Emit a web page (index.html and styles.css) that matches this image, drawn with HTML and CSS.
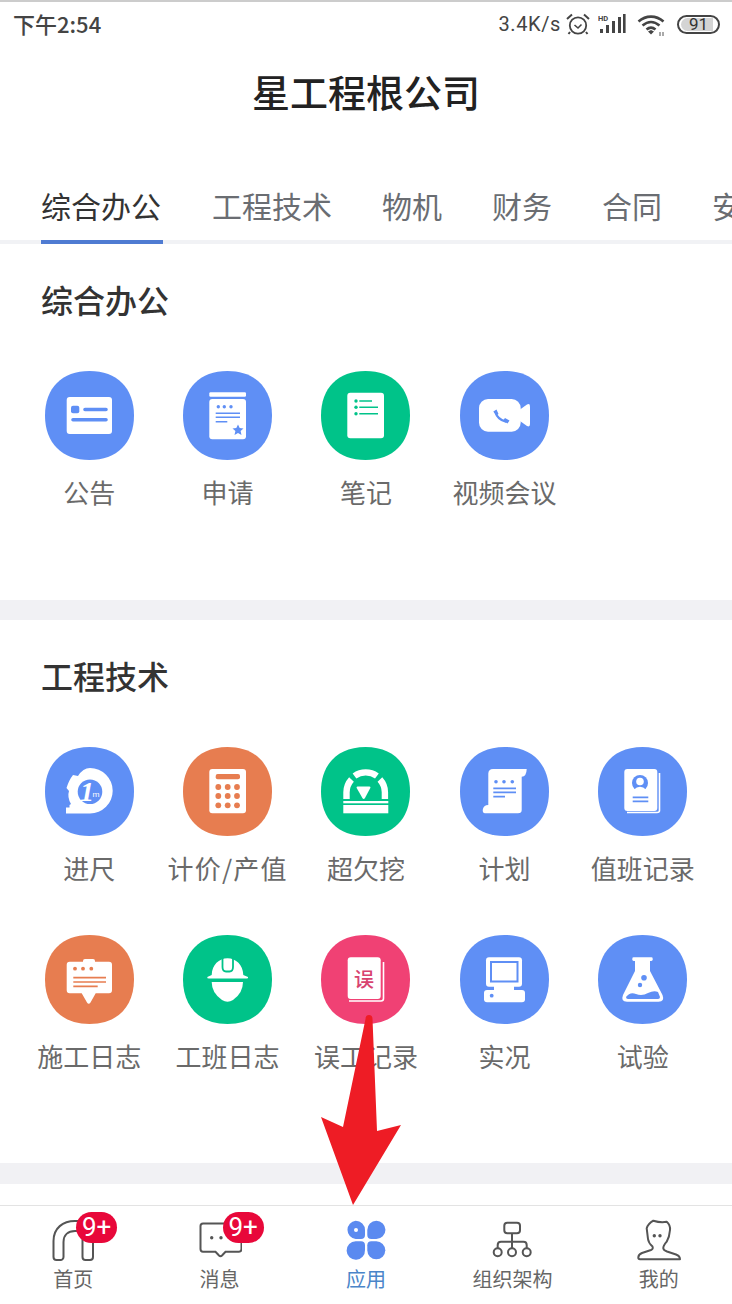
FILE: index.html
```html
<!DOCTYPE html>
<html lang="zh">
<head>
<meta charset="utf-8">
<title>星工程根公司</title>
<link rel="stylesheet" href="styles.css">
</head>
<body>
<svg class="defs" width="0" height="0"><defs>
<path id="sq" d="M44.5 0C72 0 89 17 89 44.5C89 72 72 89 44.5 89C17 89 0 72 0 44.5C0 17 17 0 44.5 0Z"/>
</defs></svg>
<div class="app">
  <header class="status">
    <span class="clock">下午2:54</span>
    <div class="status-right">
      <span class="speed">3.4K/s</span>
      <svg class="st-alarm" width="24" height="22" viewBox="0 0 24 22"><circle cx="12" cy="12.5" r="8.2" fill="none" stroke="#444" stroke-width="1.8"/><path d="M8.5 12l3.5 3 3.5-3.5" fill="none" stroke="#444" stroke-width="1.6"/><path d="M1 6l5-4.5M23 6l-5-4.5M4 19l-1.5 2M20 19l1.5 2" stroke="#444" stroke-width="2" fill="none"/></svg>
      <svg class="st-signal" width="28" height="20" viewBox="0 0 28 20"><text x="0" y="6.5" class="hd">HD</text><rect x="2" y="15" width="3" height="4" fill="#444"/><rect x="8" y="11" width="3" height="8" fill="#444"/><rect x="14" y="7" width="3" height="12" fill="#444"/><rect x="20" y="3" width="3" height="16" fill="#444"/><rect x="25" y="0" width="2.6" height="19" fill="#444"/></svg>
      <svg class="st-wifi" width="30" height="23" viewBox="0 0 30 23"><path d="M1.5 7.5C9 1 19 1 26.5 7.5M5.5 11.5C11 7 17 7 22.5 11.5M9.5 15.5C12.5 13 15.5 13 18.5 15.5" fill="none" stroke="#444" stroke-width="2.6"/><path d="M11 17.5l3-1.5 3 1.5-3 3z" fill="#444"/><path d="M23 18v4M26 18v4" stroke="#555" stroke-width="1"/></svg>
      <div class="battery"><span class="battery-fill"></span><span class="battery-num">91</span></div>
    </div>
  </header>

  <h1 class="title">星工程根公司</h1>

  <nav class="tabs">
    <span class="tab tab-active">综合办公</span>
    <span class="tab">工程技术</span>
    <span class="tab">物机</span>
    <span class="tab">财务</span>
    <span class="tab">合同</span>
    <span class="tab">安全</span>
  </nav>

  <main class="content">
    <section class="section">
      <h2 class="section-title">综合办公</h2>
      <div class="grid">
        <div class="item">
          <svg class="icon blue" viewBox="0 0 89 89"><use href="#sq" fill="currentColor"/><rect x="21.7" y="26" width="45.3" height="37" rx="3" fill="#fff"/><rect x="26" y="34.7" width="8.3" height="7.6" rx="2" fill="currentColor"/><path d="M40 38.5H61M28 48.7H61" stroke="currentColor" stroke-width="3.6" stroke-linecap="round"/></svg>
          <span class="label">公告</span>
        </div>
        <div class="item">
          <svg class="icon blue" viewBox="0 0 89 89"><use href="#sq" fill="currentColor"/><rect x="26.3" y="21.3" width="36.7" height="4.4" rx="1.2" fill="#fff"/><rect x="26.3" y="28" width="36.7" height="40.3" rx="3" fill="#fff"/><circle cx="35.3" cy="35.7" r="1.7" fill="currentColor"/><circle cx="41.3" cy="35.7" r="1.7" fill="currentColor"/><circle cx="48" cy="35.7" r="1.7" fill="currentColor"/><path d="M32.7 42.3H57M32.7 46.3H57M32.7 50.7H44.3" stroke="currentColor" stroke-width="1.6"/><path d="M55 53.5l1.7 3.6 3.8.4-2.9 2.6.9 3.9-3.5-2-3.5 2 .9-3.9-2.9-2.6 3.8-.4z" fill="currentColor"/></svg>
          <span class="label">申请</span>
        </div>
        <div class="item">
          <svg class="icon green" viewBox="0 0 89 89"><use href="#sq" fill="currentColor"/><rect x="26.3" y="21.7" width="36.7" height="45.6" rx="3" fill="#fff"/><circle cx="35" cy="30" r="1.7" fill="currentColor"/><circle cx="35" cy="36.3" r="1.7" fill="currentColor"/><circle cx="35" cy="42.7" r="1.7" fill="currentColor"/><path d="M38.3 30H51M38.3 36.3H57M38.3 42.7H57" stroke="currentColor" stroke-width="1.5"/></svg>
          <span class="label">笔记</span>
        </div>
        <div class="item">
          <svg class="icon blue" viewBox="0 0 89 89"><use href="#sq" fill="currentColor"/><rect x="19" y="28" width="41.7" height="32.7" rx="9" fill="#fff"/><path d="M60 38.5L67 33.5Q70 32 70 35.5V53Q70 56.5 67 55L60 50Z" fill="#fff"/><path d="M35.5 40.5Q37 48.5 46.5 51" fill="none" stroke="currentColor" stroke-width="2.2"/><path d="M33.3 40.5L36.5 38.5 38.5 43 36 44.5ZM43 49.5L45 47 49.5 49.5 47.5 52.5Z" fill="currentColor"/></svg>
          <span class="label">视频会议</span>
        </div>
      </div>
    </section>

    <div class="band"></div>

    <section class="section section-2">
      <h2 class="section-title">工程技术</h2>
      <div class="grid">
        <div class="item">
          <svg class="icon blue" viewBox="0 0 89 89"><use href="#sq" fill="currentColor"/><path d="M28 28L33 29Q38 21 45 21A22.7 22.7 0 0 1 45 66.4H21V60.5H24.5V58L26 57Q22 50 24 44L21.5 41Q24 33 28 28Z" fill="#fff"/><circle cx="45" cy="44.7" r="12.3" fill="currentColor"/><text x="42" y="54" class="tape-one">1</text><text x="47.5" y="49.5" class="tape-m">m</text></svg>
          <span class="label">进尺</span>
        </div>
        <div class="item">
          <svg class="icon orange" viewBox="0 0 89 89"><use href="#sq" fill="currentColor"/><rect x="26.3" y="22" width="36.7" height="44.3" rx="3" fill="#fff"/><rect x="32.7" y="27" width="24.3" height="5.3" rx="2" fill="currentColor"/><g fill="currentColor"><circle cx="35.3" cy="40" r="2.9"/><circle cx="44.7" cy="40" r="2.9"/><circle cx="54" cy="40" r="2.9"/><circle cx="35.3" cy="49" r="2.9"/><circle cx="44.7" cy="49" r="2.9"/><circle cx="54" cy="49" r="2.9"/><circle cx="35.3" cy="58.3" r="2.9"/><circle cx="44.7" cy="58.3" r="2.9"/><circle cx="54" cy="58.3" r="2.9"/></g></svg>
          <span class="label label-wide">计价/产值</span>
        </div>
        <div class="item">
          <svg class="icon green" viewBox="0 0 89 89"><use href="#sq" fill="currentColor"/><path d="M25.5 52V45.3A19.2 19.2 0 0 1 30.5 32.5M58.9 32.5A19.2 19.2 0 0 1 63.9 45.3V52" fill="none" stroke="#fff" stroke-width="6.4"/><path d="M33.5 29A19.2 19.2 0 0 1 55.9 29" fill="none" stroke="#fff" stroke-width="6.4"/><rect x="22.3" y="54" width="45" height="2.3" fill="#fff"/><rect x="22.3" y="58" width="45" height="8.3" fill="#fff"/><path d="M36.5 39.5H48.5Q50 39.5 49.3 41L44 51Q42.6 53 41.4 51L35.7 41Q35 39.5 36.5 39.5Z" fill="#fff"/></svg>
          <span class="label">超欠挖</span>
        </div>
        <div class="item">
          <svg class="icon blue" viewBox="0 0 89 89"><use href="#sq" fill="currentColor"/><path d="M28.3 26.5Q28.5 22 33 22H66.7Q66.5 29.7 61.7 29.7V63Q61.7 66.3 58 66.3H25Q22.7 66.3 22.7 63Q23.5 58 28.3 58Z" fill="#fff"/><circle cx="36" cy="34.7" r="1.8" fill="currentColor"/><circle cx="44" cy="34.7" r="1.8" fill="currentColor"/><circle cx="52.3" cy="34.7" r="1.8" fill="currentColor"/><path d="M33.3 41.3H56M33.3 45.3H56M33.3 49.7H45" stroke="currentColor" stroke-width="1.7"/></svg>
          <span class="label">计划</span>
        </div>
        <div class="item">
          <svg class="icon blue" viewBox="0 0 89 89"><use href="#sq" fill="currentColor"/><path d="M61.5 26V63.5Q61.5 65.5 59 65.5H29" fill="none" stroke="#fff" stroke-width="1.6"/><rect x="26.3" y="22" width="33" height="42" rx="3" fill="#fff"/><circle cx="42" cy="36" r="8" fill="currentColor"/><circle cx="42" cy="34.5" r="3.8" fill="#fff"/><path d="M35.5 43Q42 36.5 48.5 43L45 45H39Z" fill="#fff"/><path d="M34.7 50.3H50.3M34.7 54.3H50.3" stroke="currentColor" stroke-width="1.7"/></svg>
          <span class="label">值班记录</span>
        </div>
        <div class="item">
          <svg class="icon orange" viewBox="0 0 89 89"><use href="#sq" fill="currentColor"/><rect x="38" y="24" width="12" height="5" rx="2" fill="#fff"/><path d="M24.7 26.7H64Q67 26.7 67 29.7V55.3Q67 58.3 64 58.3H50.7L45.5 67.5Q43.7 70 42 67.5L36.7 58.3H24.7Q21.7 58.3 21.7 55.3V29.7Q21.7 26.7 24.7 26.7Z" fill="#fff"/><circle cx="30" cy="33.7" r="1.9" fill="currentColor"/><circle cx="38" cy="33.7" r="1.9" fill="currentColor"/><circle cx="46.3" cy="33.7" r="1.9" fill="currentColor"/><path d="M28.3 42.7H61M28.3 47H61M28.3 51.3H52.7" stroke="currentColor" stroke-width="1.7"/></svg>
          <span class="label">施工日志</span>
        </div>
        <div class="item">
          <svg class="icon green" viewBox="0 0 89 89"><use href="#sq" fill="currentColor"/><path d="M28.7 40C29 30 36 23.3 44.5 23.3S60 30 60.3 40L65 42Q65.5 43.5 63 43.5H26Q23.8 43.5 24.3 42Z" fill="#fff"/><path d="M39.5 23V32Q39.5 36.5 43 36.5H46.5Q50 36.5 50 32V23" fill="none" stroke="currentColor" stroke-width="1.8"/><path d="M28.7 47H60Q60 58 50 65Q44.5 68.5 39 65Q28.7 58 28.7 47Z" fill="#fff"/></svg>
          <span class="label">工班日志</span>
        </div>
        <div class="item">
          <svg class="icon pink" viewBox="0 0 89 89"><use href="#sq" fill="currentColor"/><path d="M62.5 27V63.5Q62.5 66 60 66H28" fill="none" stroke="#fff" stroke-width="1.6"/><rect x="26.7" y="22.3" width="33" height="41.7" rx="3" fill="#fff"/><text x="43" y="51.5" class="wu">误</text></svg>
          <span class="label">误工记录</span>
        </div>
        <div class="item">
          <svg class="icon blue" viewBox="0 0 89 89"><use href="#sq" fill="currentColor"/><rect x="26" y="22.3" width="36" height="29.4" rx="3" fill="#fff"/><rect x="31" y="27" width="26.5" height="19.5" fill="none" stroke="currentColor" stroke-width="2"/><rect x="34" y="50" width="20" height="6" fill="#fff"/><rect x="24" y="55" width="41" height="12.3" rx="3" fill="#fff"/><circle cx="31.7" cy="60.7" r="1.9" fill="currentColor"/></svg>
          <span class="label">实况</span>
        </div>
        <div class="item">
          <svg class="icon blue" viewBox="0 0 89 89"><use href="#sq" fill="currentColor"/><rect x="34.3" y="22.3" width="20.4" height="3.6" rx="1.4" fill="#fff"/><path d="M37 25H52V36L64.5 60Q67 66.7 60.5 66.7H29Q22.5 66.7 25 60L37 36Z" fill="#fff"/><path d="M28 62Q32 56.5 38 59T50 58Q56 55 60 57L62 62Q62 64 60 64H30Q28 64 28 62Z" fill="currentColor"/><circle cx="46" cy="42.7" r="2.8" fill="currentColor"/><circle cx="42" cy="50" r="2.2" fill="currentColor"/></svg>
          <span class="label">试验</span>
        </div>
      </div>
    </section>

    <div class="band"></div>
  </main>

  <footer class="bottom-nav">
    <div class="nav-item">
      <div class="nav-icon">
        <svg width="44" height="44" viewBox="0 0 44 44"><path d="M2.5 38V22C2.5 9 12 2 24 2H42V38A3 3 0 0 1 39 41H34.5A3 3 0 0 1 31.5 38V12H24C17 12 12.5 16 12.5 23V38A3 3 0 0 1 9.5 41H5.5A3 3 0 0 1 2.5 38Z" fill="none" stroke="#555" stroke-width="2"/></svg>
        <span class="badge">9+</span>
      </div>
      <span class="nav-label">首页</span>
    </div>
    <div class="nav-item">
      <div class="nav-icon">
        <svg width="44" height="44" viewBox="0 0 44 44"><path d="M5 4.5H41Q43.5 4.5 43.5 7V30Q43.5 32.7 41 32.7H27.5L24 36.5Q22.5 38 21 36.5L17.5 32.7H5Q2.5 32.7 2.5 30V7Q2.5 4.5 5 4.5Z" fill="none" stroke="#555" stroke-width="2"/><circle cx="13.7" cy="18.7" r="1.7" fill="#555"/><circle cx="23" cy="18.7" r="1.7" fill="#555"/></svg>
        <span class="badge">9+</span>
      </div>
      <span class="nav-label">消息</span>
    </div>
    <div class="nav-item">
      <div class="nav-icon">
        <svg width="44" height="44" viewBox="0 0 44 44"><g fill="#5b8af0"><path d="M11.7 1.7A9.2 9.2 0 0 1 21 11V16Q21 20 17 20H11.7A9.2 9.2 0 0 1 11.7 1.7Z"/><path d="M32.3 1.7A9 9 0 0 1 32.3 20H27.3Q23.3 20 23.3 16V11A9.2 9.2 0 0 1 32.3 1.7Z"/><path d="M11.7 22.3H17Q21 22.3 21 26.3V31A9.2 9.2 0 1 1 11.7 22.3Z"/><path d="M27.3 22.3H32.3A9 9 0 1 1 23.3 31.3V26.3Q23.3 22.3 27.3 22.3Z"/></g><circle cx="12" cy="11" r="2" fill="#fff"/></svg>
      </div>
      <span class="nav-label nav-label-active">应用</span>
    </div>
    <div class="nav-item">
      <div class="nav-icon">
        <svg width="44" height="44" viewBox="0 0 44 44"><g fill="none" stroke="#555" stroke-width="2"><rect x="14.3" y="3.7" width="15.7" height="10.6" rx="3"/><path d="M22 14.3V29M7.7 29V26Q7.7 22.7 11 22.7H33.5Q36.7 22.7 36.7 26V29"/><circle cx="7.7" cy="33.3" r="4"/><circle cx="22" cy="33.3" r="4"/><circle cx="36.7" cy="33.3" r="4"/></g></svg>
      </div>
      <span class="nav-label">组织架构</span>
    </div>
    <div class="nav-item">
      <div class="nav-icon">
        <svg width="44" height="44" viewBox="0 0 44 44"><path d="M1.3 38.5Q1.3 35.5 5 34L14 31Q16.5 30 15.5 27.5Q11.5 24 11 20L9.7 9.3Q11 5 16.3 1.7Q24 4 29.7 2.7Q33.5 6 33 11Q32.5 18 29.7 22.7Q26 27 26.3 29.3Q26.5 31 30 32.5L39 35.5Q43 37 43 40.3H3Q1.3 40.3 1.3 38.5Z" fill="none" stroke="#555" stroke-width="2" stroke-linejoin="round"/><circle cx="17.3" cy="16.7" r="1.7" fill="#555"/><circle cx="23" cy="16.7" r="1.7" fill="#555"/></svg>
      </div>
      <span class="nav-label">我的</span>
    </div>
  </footer>

  <svg class="arrow" width="90" height="200" viewBox="0 0 90 200"><path d="M53 5Q49.5 5 49.5 9L27 117 5 107 37 195 85 115 61 121 56.5 9Q56.5 5 53 5Z" fill="#ee1c25"/></svg>
</div>
</body>
</html>
```

FILE: styles.css
```css
* {
  box-sizing: border-box;
}

html,
body {
  margin: 0;
  padding: 0;
  background: #fff;
}

body {
  font-family: "Noto Sans CJK SC", "Noto Sans", sans-serif;
}

.defs {
  position: absolute;
}

.app {
  position: relative;
  width: 732px;
  height: 1304px;
  overflow: hidden;
  display: flex;
  flex-direction: column;
  background: #fff;
}

.status {
  height: 50px;
  flex: none;
  display: flex;
  align-items: center;
  justify-content: space-between;
  padding: 0 12px 4px 13px;
  border-top: 2px solid #ccc;
  color: #444;
}

.clock {
  font-size: 22px;
  font-weight: 500;
  line-height: 30px;
  margin-top: -2px;
}

.status-right {
  display: flex;
  align-items: center;
}

.speed {
  font-family: Roboto, sans-serif;
  font-size: 20px;
  letter-spacing: 0.6px;
  margin-right: 5px;
}

.st-alarm {
  margin-right: 8px;
}

.st-signal {
  margin-right: 11px;
}

.st-wifi {
  margin-right: 10px;
  margin-top: 3px;
}

.hd {
  font-family: Roboto, sans-serif;
  font-size: 7.5px;
  font-weight: 700;
  fill: #444;
}

.battery {
  position: relative;
  width: 43px;
  height: 19px;
  border: 2px solid #444;
  border-radius: 10px;
  overflow: hidden;
  display: flex;
  align-items: center;
  justify-content: center;
}

.battery-fill {
  position: absolute;
  left: 2px;
  top: 1px;
  bottom: 1px;
  width: 32px;
  background: #d4d4d4;
  border-radius: 7px 0 0 7px;
}

.battery-num {
  position: relative;
  font-family: Roboto, sans-serif;
  font-size: 17px;
  line-height: 15px;
  color: #333;
}

.title {
  flex: none;
  margin: 0;
  height: 86px;
  padding-top: 16px;
  font-size: 38px;
  line-height: 50px;
  font-weight: 500;
  color: #222;
  text-align: center;
}

.tabs {
  flex: none;
  height: 108px;
  display: flex;
  align-items: flex-start;
  gap: 50px;
  padding: 50px 0 0 41px;
  box-shadow: inset 0 -4px 0 #f1f2f5;
  overflow: hidden;
}

.tab {
  flex: none;
  height: 58px;
  font-size: 30px;
  line-height: 38px;
  color: #6a6d72;
  white-space: nowrap;
}

.tab-active {
  width: 122px;
  margin-right: -1px;
  color: #333;
  border-bottom: 4px solid #4f7bd2;
}

.content {
  flex: 1;
  min-height: 0;
  overflow: hidden;
}

.section {
  padding: 36px 20px 90px;
}

.section-2 {
  padding-bottom: 89px;
}

.section-title {
  margin: 0 0 53px 21px;
  font-size: 32px;
  line-height: 38px;
  font-weight: 500;
  color: #333;
}

.grid {
  display: grid;
  grid-template-columns: repeat(5, 1fr);
  row-gap: 49px;
}

.item {
  display: flex;
  flex-direction: column;
  align-items: center;
  gap: 14px;
}

.icon {
  display: block;
  width: 89px;
  height: 89px;
}

.blue {
  color: #5f8ff5;
}

.green {
  color: #00c389;
}

.orange {
  color: #e77d50;
}

.pink {
  color: #f04174;
}

.label {
  font-size: 26px;
  line-height: 36px;
  color: #6a6a6a;
  white-space: nowrap;
}

.label-wide {
  letter-spacing: 1.2px;
}

.tape-one {
  font-family: "Liberation Serif", serif;
  font-size: 28px;
  font-weight: 700;
  font-style: italic;
  fill: #fff;
  text-anchor: middle;
}

.tape-m {
  font-family: Roboto, sans-serif;
  font-size: 8px;
  fill: #fff;
}

.wu {
  font-family: "Noto Sans CJK SC", sans-serif;
  font-size: 20px;
  font-weight: 500;
  fill: #d8436f;
  text-anchor: middle;
}

.band {
  height: 20px;
  background: #f1f1f4;
}

.section-2 + .band {
  height: 21px;
}

.bottom-nav {
  flex: none;
  height: 99px;
  display: grid;
  grid-template-columns: repeat(5, 1fr);
  border-top: 1px solid #e3e3e3;
  background: #fff;
}

.nav-item {
  display: flex;
  flex-direction: column;
  align-items: center;
  padding-top: 13px;
}

.nav-icon {
  position: relative;
  width: 44px;
  height: 44px;
}

.nav-icon svg {
  display: block;
}

.badge {
  position: absolute;
  top: -7px;
  left: 25px;
  width: 41px;
  height: 31px;
  border-radius: 16px;
  background: #e8083a;
  color: #fff;
  font-family: Roboto, sans-serif;
  font-size: 26px;
  line-height: 30px;
  text-align: center;
}

.nav-label {
  margin-top: 1px;
  font-size: 20px;
  line-height: 30px;
  color: #666;
  white-space: nowrap;
}

.nav-label-active {
  color: #4a85c9;
}

.arrow {
  position: absolute;
  left: 316px;
  top: 1010px;
  pointer-events: none;
}
```
